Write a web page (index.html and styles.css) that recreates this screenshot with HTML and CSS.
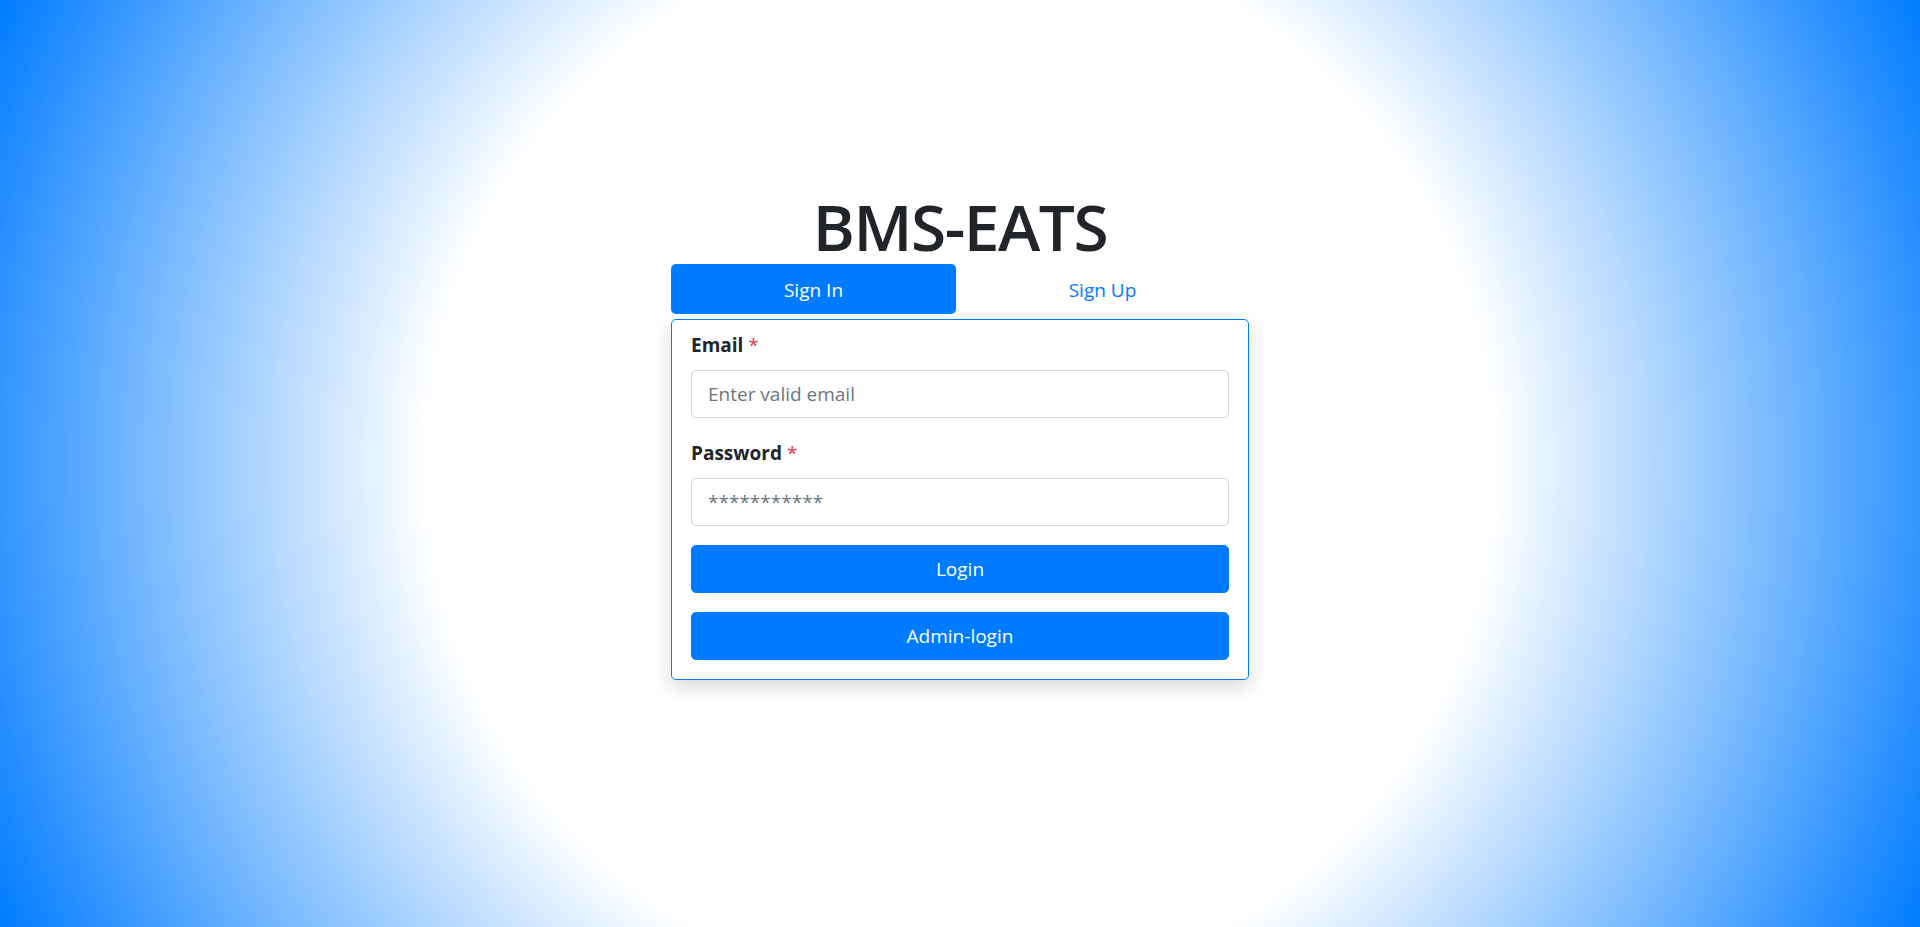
FILE: index.html
```html
<!DOCTYPE html>
<html lang="en">
<head>
<meta charset="utf-8">
<title>BMS-EATS</title>
<link rel="stylesheet" href="styles.css">
</head>
<body>
<main class="page">
  <div class="auth">
    <h1 class="brand">BMS-EATS</h1>
    <nav class="tabs">
      <a class="tab tab-active" href="#">Sign In</a>
      <a class="tab" href="#">Sign Up</a>
    </nav>
    <form class="card">
      <div class="field">
        <label class="label" for="email">Email <span class="req">*</span></label>
        <input class="input" id="email" type="email" placeholder="Enter valid email">
      </div>
      <div class="field">
        <label class="label" for="pw">Password <span class="req">*</span></label>
        <input class="input" id="pw" type="password" placeholder="***********">
      </div>
      <button class="btn" type="button">Login</button>
      <button class="btn" type="button">Admin-login</button>
    </form>
  </div>
</main>
</body>
</html>
```

FILE: styles.css
```css
html, body {
  margin: 0;
  height: 100%;
}
body {
  font-family: "Open Sans", "Noto Sans", sans-serif;
  color: #212529;
  background: radial-gradient(circle, #ffffff 50%, #007bff 100%);
}
.page {
  min-height: 100%;
  display: flex;
  justify-content: center;
  padding-top: 187px;
  box-sizing: border-box;
}
.auth {
  width: 578px;
  display: flex;
  flex-direction: column;
}
.brand {
  margin: 2px 0 -2px;
  font-size: 64px;
  line-height: 1.2;
  font-weight: 600;
  text-align: center;
  color: #212529;
  letter-spacing: -1.5px;
}
.tabs {
  display: grid;
  grid-template-columns: 285px 1fr;
  margin-bottom: 5px;
}
.tab {
  display: block;
  text-align: center;
  font-size: 19px;
  line-height: 30px;
  padding: 11px 0 9px;
  color: #007bff;
  text-decoration: none;
  border-radius: 5px;
}
.tab-active {
  background: #007bff;
  color: #fff;
}
.card {
  margin: 0;
  background: #fff;
  border: 1px solid #007bff;
  border-radius: 5px;
  padding: 10px 19px 19px;
  box-shadow: 0 8px 18px rgba(0, 0, 0, 0.15);
  display: flex;
  flex-direction: column;
}
.field {
  display: flex;
  flex-direction: column;
  margin-bottom: 20px;
}
.field + .field {
  margin-bottom: 19px;
}
.label {
  font-size: 19px;
  line-height: 30px;
  font-weight: 700;
  margin-bottom: 10px;
  color: #212529;
}
.req {
  color: #dc3545;
  font-weight: 400;
}
.input {
  box-sizing: border-box;
  height: 48px;
  width: 100%;
  font-family: inherit;
  font-size: 19px;
  padding: 8px 16px;
  border: 1px solid #ced4da;
  border-radius: 5px;
  color: #495057;
  background: #fff;
  outline: none;
}
.input::placeholder {
  color: #6c757d;
  opacity: 1;
}
.btn {
  box-sizing: border-box;
  height: 48px;
  width: 100%;
  font-family: inherit;
  font-size: 19px;
  color: #fff;
  background: #007bff;
  border: 1px solid #007bff;
  border-radius: 5px;
  cursor: pointer;
}
.btn + .btn {
  margin-top: 19px;
}
```
